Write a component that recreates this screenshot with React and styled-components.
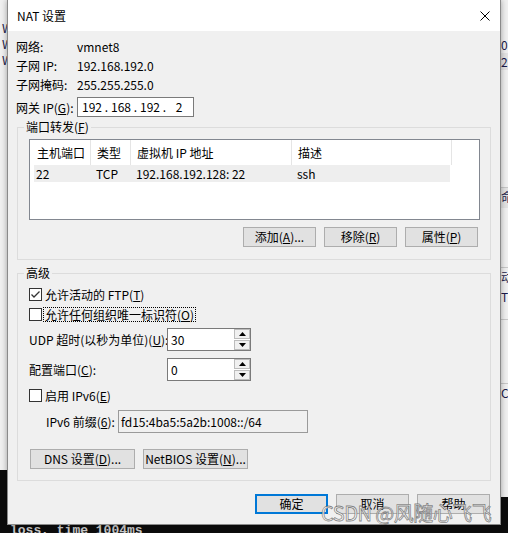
import React from "react";
import styled, { createGlobalStyle } from "styled-components";

const GlobalStyle = createGlobalStyle`
  html, body {
    margin: 0;
    padding: 0;
    background: #0c0c0c;
  }
  body {
    font-family: "Noto Sans CJK SC", "Microsoft YaHei UI", sans-serif;
    font-size: 12px;
    color: #000;
  }
  * { box-sizing: border-box; }
`;

const Desktop = styled.div`
  position: relative;
  width: 508px;
  height: 533px;
  overflow: hidden;
  background: #0c0c0c;
`;

// windows lying behind the dialog
const LeftWindow = styled.div`
  position: absolute;
  left: 0;
  top: 0;
  width: 7px;
  height: 470px;
  background: #f0f0f0;
  overflow: hidden;
  padding: 20px 0 0 2px;
  color: #1a1a4a;
  line-height: 16px;
`;

const RightWindow = styled.div`
  position: absolute;
  left: 501px;
  top: 0;
  width: 7px;
  height: 497px;
  background: #f0f0f0;
  overflow: hidden;
  padding-top: 36px;
  color: #1a1a4a;
  line-height: 17px;
`;

const StripLine = styled.div`
  height: ${(p) => p.h || 16}px;
  background: ${(p) => (p.band ? "#e3e3e3" : "transparent")};
  border-bottom: ${(p) => (p.rule ? "1px solid #c8c8c8" : "none")};
  white-space: nowrap;
`;

const Terminal = styled.div`
  position: absolute;
  left: 10px;
  top: 523px;
  font-family: "Liberation Mono", monospace;
  font-size: 13px;
  font-weight: bold;
  line-height: 16px;
  color: #c8c8c8;
  white-space: nowrap;
`;

const Dialog = styled.div`
  position: absolute;
  left: 7px;
  top: 0;
  width: 494px;
  height: 525px;
  background: #f0f0f0;
  border: 1px solid #8a8a8a;
  border-top: none;
  box-shadow: 0 0 6px rgba(0, 0, 0, 0.35);
  display: flex;
  flex-direction: column;
`;

const TitleBar = styled.div`
  height: 31px;
  background: #fff;
  display: flex;
  align-items: center;
  justify-content: space-between;
  padding: 0 10px 0 9px;
  font-size: 12px;
`;

const Body = styled.div`
  display: flex;
  flex-direction: column;
  padding: 6px 10px 0 8px;
`;

const InfoRow = styled.div`
  display: grid;
  grid-template-columns: 61px auto;
  height: 19px;
  line-height: 19px;
  margin-top: ${(p) => p.mt || 0}px;
  align-items: center;
`;

const IpBox = styled.div`
  width: 117px;
  height: 20px;
  background: #fff;
  border: 1px solid #7a7a7a;
  display: flex;
  align-items: center;
  padding-left: 3px;
  line-height: 18px;
`;

const IpField = styled.span`
  width: 22px;
  text-align: center;
`;

const IpDot = styled.span`
  width: 7px;
  text-align: center;
`;

const Group = styled.fieldset`
  margin: ${(p) => p.mt}px 0 0 1px;
  width: 474px;
  padding: 0;
  border: 1px solid #dcdcdc;
  min-width: 0;
`;

const Legend = styled.legend`
  margin-left: 6px;
  padding: 0 2px;
  line-height: 16px;
  font-size: 12px;
`;

const GroupInner = styled.div`
  padding: ${(p) => p.pad};
  display: flex;
  flex-direction: column;
`;

const ListView = styled.div`
  width: 451px;
  height: 81px;
  background: #fff;
  border: 1px solid #828790;
`;

const ListHeader = styled.div`
  display: grid;
  grid-template-columns: 61px 40px 161px 160px;
  height: 25px;
`;

const HeadCell = styled.div`
  border-right: 1px solid #e5e5e5;
  padding-left: ${(p) => p.pl || 6}px;
  line-height: 25px;
  white-space: nowrap;
`;

const ListRow = styled.div`
  display: grid;
  grid-template-columns: 56px 40px 161px 159px;
  margin-left: 4px;
  width: 416px;
  height: 17px;
  line-height: 17px;
  background: #eeeeee;
`;

const RowCell = styled.div`
  padding-left: ${(p) => p.pl || 6}px;
  white-space: nowrap;
`;

const ButtonRow = styled.div`
  display: flex;
  justify-content: ${(p) => p.justify || "flex-end"};
  gap: 8px;
  margin-top: ${(p) => p.mt}px;
  padding: ${(p) => p.pad || 0};
`;

const Button = styled.div`
  width: ${(p) => p.w || 73}px;
  height: 20px;
  background: #e1e1e1;
  border: ${(p) => (p.primary ? "2px solid #0078d7" : "1px solid #adadad")};
  display: flex;
  align-items: center;
  justify-content: center;
  white-space: nowrap;
  line-height: 16px;
`;

const CheckRow = styled.div`
  display: flex;
  align-items: center;
  gap: 2px;
  height: 20px;
  margin-top: ${(p) => p.mt || 0}px;
`;

const CheckBox = styled.span`
  width: 13px;
  height: 13px;
  border: 1px solid #333;
  background: #fff;
  display: flex;
  align-items: center;
  justify-content: center;
`;

const CheckLabel = styled.span`
  padding: 0 1px;
  line-height: 13px;
  outline: ${(p) => (p.focused ? "1px dotted #000" : "none")};
  outline-offset: 0;
`;

const FieldRow = styled.div`
  display: grid;
  grid-template-columns: ${(p) => p.cols};
  align-items: center;
  margin-top: ${(p) => p.mt}px;
  padding-left: ${(p) => p.pl || 0}px;
  white-space: nowrap;
`;

const SpinBox = styled.div`
  width: 84px;
  height: 23px;
  background: #fff;
  border: 1px solid #7a7a7a;
  display: flex;
`;

const SpinValue = styled.div`
  flex: 1;
  padding-left: 3px;
  line-height: 21px;
`;

const SpinButtons = styled.div`
  width: 16px;
  display: flex;
  flex-direction: column;
  gap: 1px;
`;

const SpinButton = styled.div`
  flex: 1;
  background: #f0f0f0;
  border: 1px solid #bcbcbc;
  display: flex;
  align-items: center;
  justify-content: center;
`;

const TextBox = styled.div`
  width: 190px;
  height: 23px;
  background: #f0f0f0;
  border: 1px solid #9a9a9a;
  padding-left: 2px;
  line-height: 21px;
`;

const Watermark = styled.div`
  position: absolute;
  left: 321px;
  top: 501px;
  font-family: "Noto Sans CJK SC", sans-serif;
  font-size: 20px;
  line-height: 24px;
  color: rgba(255, 255, 255, 0.85);
  -webkit-text-stroke: 0.8px rgba(95, 95, 95, 0.75);
  white-space: nowrap;
  letter-spacing: -0.5px;
`;

const Arrow = ({ down }) => (
  <svg width="7" height="4" viewBox="0 0 7 4">
    <polygon points={down ? "0,0 7,0 3.5,4" : "0,4 7,4 3.5,0"} fill="#000" />
  </svg>
);

const Check = () => (
  <svg width="11" height="11" viewBox="0 0 11 11">
    <polyline points="1.5,5.5 4,8 9.5,2.5" fill="none" stroke="#333" strokeWidth="1.3" />
  </svg>
);

function Spin({ value }) {
  return (
    <SpinBox>
      <SpinValue>{value}</SpinValue>
      <SpinButtons>
        <SpinButton><Arrow /></SpinButton>
        <SpinButton><Arrow down /></SpinButton>
      </SpinButtons>
    </SpinBox>
  );
}

export default function App() {
  return (
    <Desktop>
      <GlobalStyle />
      <LeftWindow>
        <StripLine>W</StripLine>
        <StripLine>W</StripLine>
        <StripLine>W</StripLine>
      </LeftWindow>
      <RightWindow>
        <StripLine h={17}>0</StripLine>
        <StripLine h={17} band>2.</StripLine>
        <StripLine h={118} rule />
        <StripLine h={20} band>命</StripLine>
        <StripLine h={60} rule />
        <StripLine h={20}>动</StripLine>
        <StripLine h={32} rule>T</StripLine>
        <StripLine h={64} rule />
        <StripLine h={20}>CP</StripLine>
      </RightWindow>
      <Terminal>loss, time 1004ms</Terminal>

      <Dialog>
        <TitleBar>
          <span>NAT 设置</span>
          <svg width="10" height="10" viewBox="0 0 10 10">
            <path d="M0.5 0.5 L9.5 9.5 M9.5 0.5 L0.5 9.5" stroke="#000" strokeWidth="1" />
          </svg>
        </TitleBar>

        <Body>
          <InfoRow>
            <span>网络:</span>
            <span>vmnet8</span>
          </InfoRow>
          <InfoRow>
            <span>子网 IP:</span>
            <span>192.168.192.0</span>
          </InfoRow>
          <InfoRow>
            <span>子网掩码:</span>
            <span>255.255.255.0</span>
          </InfoRow>
          <InfoRow mt={3}>
            <span>网关 IP(<u>G</u>):</span>
            <IpBox>
              <IpField>192</IpField>
              <IpDot>.</IpDot>
              <IpField>168</IpField>
              <IpDot>.</IpDot>
              <IpField>192</IpField>
              <IpDot>.</IpDot>
              <IpField>2</IpField>
            </IpBox>
          </InfoRow>

          <Group mt={3}>
            <Legend>端口转发(<u>F</u>)</Legend>
            <GroupInner pad="4px 10px 12px 11px">
              <ListView>
                <ListHeader>
                  <HeadCell pl={7}>主机端口</HeadCell>
                  <HeadCell>类型</HeadCell>
                  <HeadCell>虚拟机 IP 地址</HeadCell>
                  <HeadCell>描述</HeadCell>
                </ListHeader>
                <ListRow>
                  <RowCell pl={2}>22</RowCell>
                  <RowCell>TCP</RowCell>
                  <RowCell>192.168.192.128: 22</RowCell>
                  <RowCell>ssh</RowCell>
                </ListRow>
              </ListView>
              <ButtonRow mt={7} pad="0 2px 0 0">
                <Button>添加(<u>A</u>)...</Button>
                <Button>移除(<u>R</u>)</Button>
                <Button>属性(<u>P</u>)</Button>
              </ButtonRow>
            </GroupInner>
          </Group>

          <Group mt={5}>
            <Legend>高级</Legend>
            <GroupInner pad="3px 10px 11px 11px">
              <CheckRow>
                <CheckBox><Check /></CheckBox>
                <CheckLabel>允许活动的 FTP(<u>T</u>)</CheckLabel>
              </CheckRow>
              <CheckRow>
                <CheckBox />
                <CheckLabel focused>允许任何组织唯一标识符(<u>O</u>)</CheckLabel>
              </CheckRow>
              <FieldRow cols="138px 84px" mt={4}>
                <span>UDP 超时(以秒为单位)(<u>U</u>):</span>
                <Spin value="30" />
              </FieldRow>
              <FieldRow cols="138px 84px" mt={7}>
                <span>配置端口(<u>C</u>):</span>
                <Spin value="0" />
              </FieldRow>
              <CheckRow mt={4}>
                <CheckBox />
                <CheckLabel>启用 IPv6(<u>E</u>)</CheckLabel>
              </CheckRow>
              <FieldRow cols="72px 190px" mt={5} pl={17}>
                <span>IPv6 前缀(<u>6</u>):</span>
                <TextBox>fd15:4ba5:5a2b:1008::/64</TextBox>
              </FieldRow>
              <ButtonRow mt={16} justify="flex-start" pad="0 0 0 1px">
                <Button w={105}>DNS 设置(<u>D</u>)...</Button>
                <Button w={105}>NetBIOS 设置(<u>N</u>)...</Button>
              </ButtonRow>
            </GroupInner>
          </Group>

          <ButtonRow mt={13}>
            <Button primary>确定</Button>
            <Button>取消</Button>
            <Button>帮助</Button>
          </ButtonRow>
        </Body>
      </Dialog>

      <Watermark>CSDN @风随心飞飞</Watermark>
    </Desktop>
  );
}
